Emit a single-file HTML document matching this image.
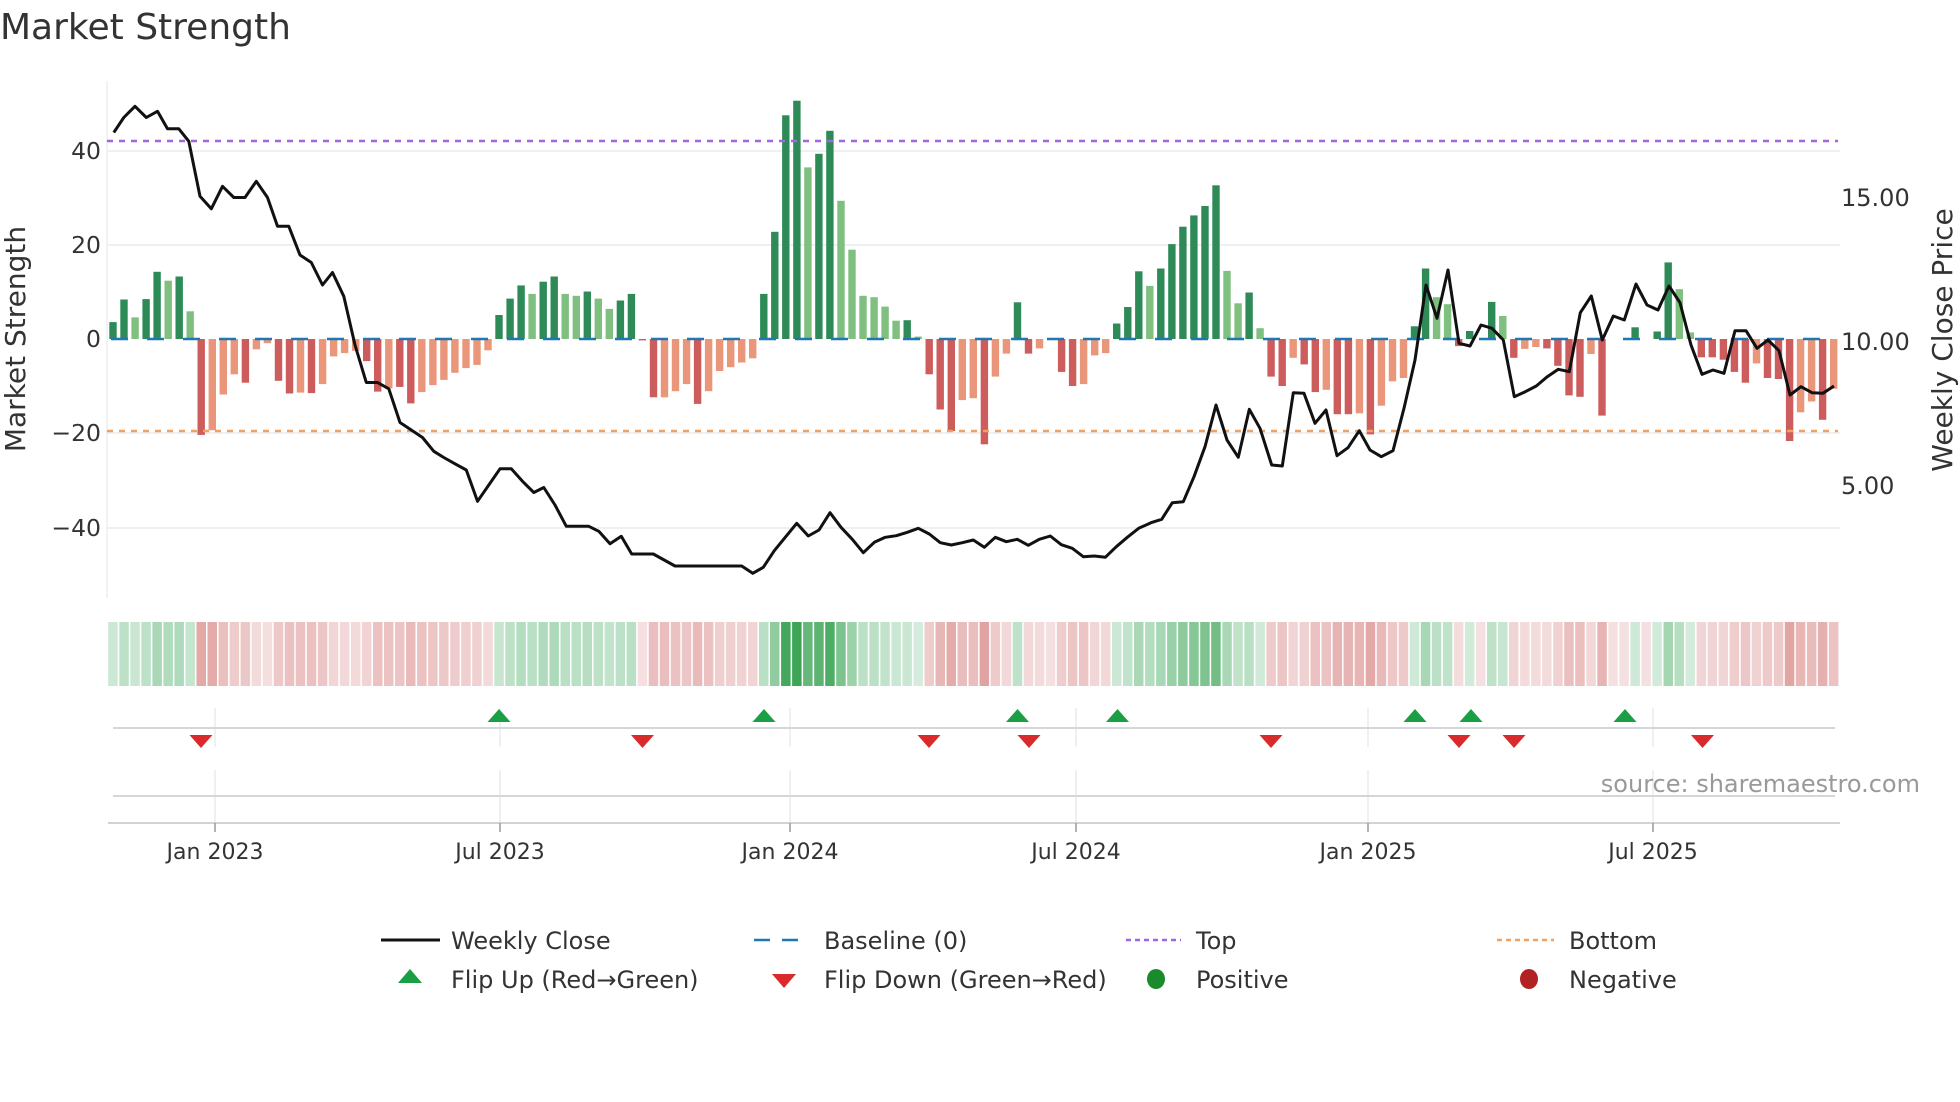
<!DOCTYPE html>
<html><head><meta charset="utf-8">
<style>
html,body{margin:0;padding:0;background:#fff;}
svg{display:block;font-family:"DejaVu Sans","Liberation Sans",sans-serif;}
</style></head>
<body>
<svg id="s" width="1960" height="1102" viewBox="0 0 1960 1102" xmlns="http://www.w3.org/2000/svg">
<rect width="1960" height="1102" fill="#fff"/>
<text x="0" y="39" font-size="36" fill="#333">Market Strength</text>
<!-- grid -->
<g stroke="#eef1f4" stroke-width="2">
<line x1="107" y1="151" x2="1840" y2="151"/>
<line x1="107" y1="245" x2="1840" y2="245"/>
<line x1="107" y1="433" x2="1840" y2="433"/>
<line x1="107" y1="528" x2="1840" y2="528"/>
</g>
<line x1="107" y1="81" x2="107" y2="598" stroke="#eceef0" stroke-width="1.5"/>
<g font-size="23.5" fill="#333" text-anchor="end">
<text x="101" y="159">40</text>
<text x="101" y="253">20</text>
<text x="101" y="347">0</text>
<text x="101" y="441">−20</text>
<text x="101" y="536">−40</text>
</g>
<text transform="translate(25,339) rotate(-90)" font-size="28" fill="#333" text-anchor="middle">Market Strength</text>
<g font-size="24" fill="#333">
<text x="1841" y="206">15.00</text>
<text x="1841" y="350">10.00</text>
<text x="1841" y="494">5.00</text>
</g>
<text transform="translate(1952,340) rotate(-90)" font-size="28" fill="#333" text-anchor="middle">Weekly Close Price</text>
<g id="bars"></g>
<line x1="107" y1="141" x2="1838" y2="141" stroke="#a066e0" stroke-width="2.5" stroke-dasharray="6,6"/>
<line x1="107" y1="431" x2="1838" y2="431" stroke="#f0a060" stroke-width="2.5" stroke-dasharray="6,6"/>
<line x1="111" y1="339" x2="1838" y2="339" stroke="#1f77b4" stroke-width="2.5" stroke-dasharray="17,19"/>
<polyline fill="none" stroke="#111" stroke-width="3" stroke-linejoin="round" points="113.8,132.5 123.8,117.5 135,106.3 146.3,117.5 157.5,111.3 167.5,128.8 178.8,128.8 188.8,141.3 200,196.3 211.3,208.8 222.5,186.3 233.8,197.5 245,197.5 256.3,181.3 267.5,197.5 277.5,226.3 288.8,226.3 300,255 311.3,262.5 322.5,285 332.5,272.5 343.8,296.3 355,345 366.3,382.5 377.5,382.5 388.8,388.8 400,422.5 411.3,430 422.5,437.5 433.8,451.3 443.8,457.5 455,463.8 466.3,470 477.5,501.3 488.8,485 500,468.8 511.3,468.8 522.5,481.3 533.8,492.5 543.8,487.5 555,505 566.3,526.3 577.5,526.3 588.8,526.3 598.8,531.3 610,543.8 621.3,536.3 631.7,554 653.3,554 675,566 741.7,566 752.7,573.3 763.3,567.3 774.3,550.7 796.7,523.3 808.3,536 819,530 830,512.7 841,527.3 852.3,539.3 863.3,552.7 874.3,542.3 885.3,537.3 896.3,535.7 907.3,532.3 918.3,528.3 929.3,534 940.3,542.7 951.3,545 962.3,542.7 973.3,540 984.3,547.3 995.3,537.3 1006.3,541.7 1017.3,539.3 1028.3,545.3 1039.3,539.3 1050.3,536 1061.3,544.7 1072.3,548.3 1083.3,556.7 1094.3,556 1105.3,557.3 1116.3,546.7 1127.3,537.3 1138.7,528.3 1151,522.7 1161.7,519.3 1172.3,502.7 1183.3,501.7 1194,476.7 1205,446.7 1216,405 1227,440 1238.3,457.3 1249.3,409.3 1260,428.3 1271.7,465 1282.3,466 1293.3,392.7 1304,393.3 1315,423.3 1326,410 1337,455.7 1348,447.7 1359.3,430.7 1370,450 1381.3,456.7 1393,450.7 1404,408.3 1415,360 1426,285 1437,318.3 1448,270 1459,343.3 1470,346 1481,325 1492,328.3 1503.3,340 1514.3,396.7 1525.3,391.7 1536.3,386 1547.3,376.7 1558.3,369.3 1569.3,371.7 1580.3,312.7 1591.3,296 1602.3,340 1613.3,316 1624.3,320 1636,284 1647,305 1658,310 1669,286 1680,302.7 1691,345 1702,374.3 1713,370 1724,373.3 1735,330.7 1746,330.7 1757,348.3 1768,340 1779,350.7 1790,395 1801,386.7 1812,392.7 1823,393.3 1834,386"/>
<g id="strip"></g>
<!-- marker panel -->
<g stroke="#e8eaed" stroke-width="1.5">
<line x1="215" y1="708" x2="215" y2="747"/><line x1="215" y1="770" x2="215" y2="823"/>
<line x1="500" y1="708" x2="500" y2="747"/><line x1="500" y1="770" x2="500" y2="823"/>
<line x1="790" y1="708" x2="790" y2="747"/><line x1="790" y1="770" x2="790" y2="823"/>
<line x1="1076" y1="708" x2="1076" y2="747"/><line x1="1076" y1="770" x2="1076" y2="823"/>
<line x1="1368" y1="708" x2="1368" y2="747"/><line x1="1368" y1="770" x2="1368" y2="823"/>
<line x1="1653" y1="708" x2="1653" y2="747"/><line x1="1653" y1="770" x2="1653" y2="823"/>
</g>
<line x1="113" y1="728" x2="1835" y2="728" stroke="#d4d6d9" stroke-width="2"/>
<line x1="113" y1="796" x2="1835" y2="796" stroke="#d4d6d9" stroke-width="2"/>
<line x1="108" y1="823" x2="1840" y2="823" stroke="#d0d2d5" stroke-width="2"/>
<g stroke="#999" stroke-width="1.5">
<line x1="215" y1="823" x2="215" y2="832"/><line x1="500" y1="823" x2="500" y2="832"/>
<line x1="790" y1="823" x2="790" y2="832"/><line x1="1076" y1="823" x2="1076" y2="832"/>
<line x1="1368" y1="823" x2="1368" y2="832"/><line x1="1653" y1="823" x2="1653" y2="832"/>
</g>
<g id="tri"></g>
<text x="1920" y="792" font-size="24" fill="#999" text-anchor="end">source: sharemaestro.com</text>
<g font-size="22" fill="#333" text-anchor="middle">
<text x="215" y="859">Jan 2023</text>
<text x="500" y="859">Jul 2023</text>
<text x="790" y="859">Jan 2024</text>
<text x="1076" y="859">Jul 2024</text>
<text x="1368" y="859">Jan 2025</text>
<text x="1653" y="859">Jul 2025</text>
</g>
<!-- legend -->
<line x1="381" y1="940" x2="440" y2="940" stroke="#111" stroke-width="3"/>
<line x1="754" y1="940" x2="809" y2="940" stroke="#1f77b4" stroke-width="2.5" stroke-dasharray="16,12"/>
<line x1="1126" y1="940" x2="1181" y2="940" stroke="#a066e0" stroke-width="2.5" stroke-dasharray="5,4"/>
<line x1="1497" y1="940" x2="1554" y2="940" stroke="#f0a060" stroke-width="2.5" stroke-dasharray="5,4"/>
<polygon points="410,969 422,983 398,983" fill="#1a9f45"/>
<polygon points="772,974 796,974 784,988" fill="#d92b2b"/>
<ellipse cx="1156" cy="979" rx="9" ry="10" fill="#1a8a2a"/>
<ellipse cx="1529" cy="979" rx="9" ry="10" fill="#b22222"/>
<g font-size="24" fill="#333">
<text x="451" y="949">Weekly Close</text>
<text x="824" y="949">Baseline (0)</text>
<text x="1196" y="949">Top</text>
<text x="1569" y="949">Bottom</text>
<text x="451" y="988">Flip Up (Red→Green)</text>
<text x="824" y="988">Flip Down (Green→Red)</text>
<text x="1196" y="988">Positive</text>
<text x="1569" y="988">Negative</text>
</g>
</svg>
<script>
var D=[[3.6,1],[8.4,1],[4.6,0],[8.5,1],[14.3,1],[12.4,0],[13.3,1],[5.9,0],
[-20.4,1],[-19.4,0],[-11.8,0],[-7.5,0],[-9.3,1],[-2.2,0],[-0.9,0],[-8.9,1],[-11.6,1],[-11.4,0],[-11.5,1],[-9.6,0],[-3.7,0],[-3,0],[-2.5,0],[-4.7,1],[-11.2,1],[-10.5,0],[-10.2,1],[-13.7,1],[-11.3,0],[-9.8,0],[-8.7,0],[-7.2,0],[-6.2,0],[-5.5,0],[-2.4,0],
[5.1,1],[8.6,1],[11.4,1],[9.6,0],[12.2,1],[13.3,1],[9.6,0],[9.2,0],[10.1,1],[8.6,0],[6.4,0],[8.2,1],[9.6,1],
[-0.3,1],
[-12.4,1],[-12.4,0],[-11.1,0],[-9.6,0],[-13.8,1],[-11.1,0],[-6.8,0],[-6,0],[-5,0],[-4.1,0],
[9.6,1],[22.8,1],[47.6,1],[50.7,1],[36.5,0],[39.4,1],[44.3,1],[29.4,0],[19,0],[9.2,0],[8.9,0],[6.9,0],[3.9,0],[4,1],[0.5,0],
[-7.5,1],[-15,1],[-19.6,1],[-13,0],[-12.6,0],[-22.4,1],[-8,0],[-3.1,0],
[7.8,1],[-3.1,1],[-2,0],[0,0],[-7,1],[-10,1],[-9.6,0],[-3.5,0],[-3,0],[3.3,1],[6.8,1],
[14.4,1],[11.3,0],[15,1],[20.2,1],[23.9,1],[26.3,1],[28.3,1],[32.7,1],[14.5,0],[7.6,0],[9.9,1],[2.3,0],
[-8,1],[-10,1],[-4,0],[-5.4,1],[-11.3,1],[-10.8,0],[-16,1],[-16,1],[-15.8,0],[-20.3,1],[-14.2,0],[-9,0],[-8.3,0],
[2.7,1],[15,1],[8.9,0],[7.4,0],
[-1.5,1],[1.7,1],[0,0],[7.9,1],[4.9,0],
[-4,1],[-2.1,0],[-1.7,0],[-2,1],[-5.7,1],[-12,1],[-12.3,1],[-3.2,0],[-16.3,1],
[0,0],[0,0],[2.5,1],[0,0],[1.6,1],[16.3,1],[10.6,0],[1.4,0],
[-3.9,1],[-3.9,1],[-4.4,1],[-7,1],[-9.3,1],[-5.2,0],[-8.3,1],[-8.5,1],[-21.7,1],[-15.6,0],[-13.3,0],[-17.2,1],[-10.6,0]];
var NS="http://www.w3.org/2000/svg";
function el(p,t,a){var e=document.createElementNS(NS,t);for(var k in a)e.setAttribute(k,a[k]);p.appendChild(e);return e;}
function mix(a,b,t){var r=[];for(var i=0;i<3;i++)r.push(Math.round(a[i]+(b[i]-a[i])*t));return "rgb("+r.join(",")+")";}
var bars=document.getElementById("bars"),strip=document.getElementById("strip");
var sp=11.03,c0=113,u=4.7;
for(var i=0;i<D.length;i++){
 var v=D[i][0],dk=D[i][1],cx=c0+sp*i;
 if(v!==0){
  var col=v>0?(dk?"#2e8b57":"#7fbf7f"):(dk?"#cd5c5c":"#e9967a");
  var h=Math.abs(v)*u;
  el(bars,"rect",{x:(cx-3.7).toFixed(1),y:(v>0?339-h:339).toFixed(1),width:7.4,height:h.toFixed(1),fill:col});
 }
 var fc;
 if(v>0){fc=mix([214,237,222],[61,165,85],Math.min(1,v/50));}
 else{fc=mix([245,224,225],[222,156,154],Math.min(1,-v/25));}
 el(strip,"rect",{x:(cx-sp/2+0.75).toFixed(1),y:622,width:(sp-1.5).toFixed(1),height:64,fill:fc});
}
var tri=document.getElementById("tri");
[499,764,1017.5,1117.5,1415,1471,1625].forEach(function(x){el(tri,"polygon",{points:(x)+",709 "+(x+11.5)+",722 "+(x-11.5)+",722",fill:"#1a9f45"});});
[201,642.5,929,1029,1271,1459,1514,1702.5].forEach(function(x){el(tri,"polygon",{points:(x-11.5)+",735 "+(x+11.5)+",735 "+x+",748",fill:"#d92b2b"});});
</script>
</body></html>
